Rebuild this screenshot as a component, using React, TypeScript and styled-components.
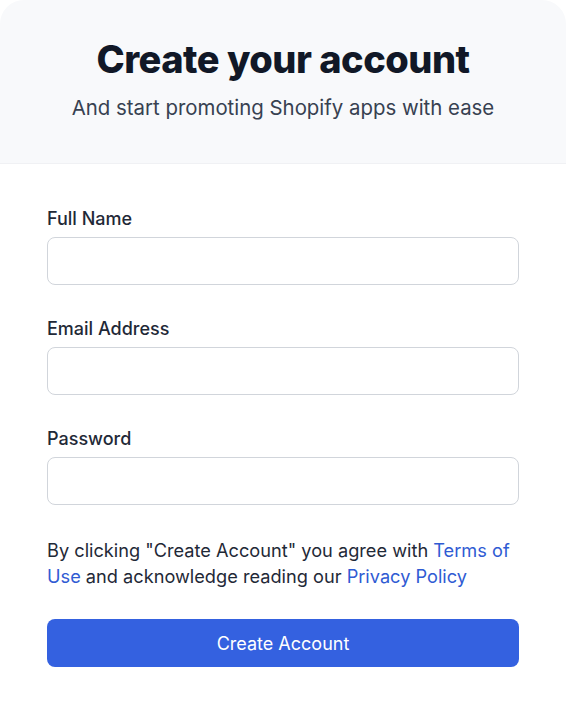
import styled, { createGlobalStyle } from "styled-components";

const GlobalStyle = createGlobalStyle`
  body {
    margin: 0;
    background: #ffffff;
    font-family: Inter, "Noto Sans", sans-serif;
    -webkit-font-smoothing: antialiased;
  }
  * { box-sizing: border-box; }
`;

const fields = [
  { id: "name", label: "Full Name", type: "text" },
  { id: "email", label: "Email Address", type: "email" },
  { id: "password", label: "Password", type: "password" },
];

export default function App(): JSX.Element {
  return (
    <>
      <GlobalStyle />
      <Card>
        <Header>
          <Title>Create your account</Title>
          <Subtitle>And start promoting Shopify apps with ease</Subtitle>
        </Header>
        <Form onSubmit={(e) => e.preventDefault()}>
          {fields.map((f) => (
            <Field key={f.id}>
              <Label htmlFor={f.id}>{f.label}</Label>
              <Input id={f.id} type={f.type} />
            </Field>
          ))}
          <Terms>
            By clicking "Create Account" you agree with{" "}
            <Link href="#">Terms of Use</Link> and acknowledge reading our{" "}
            <Link href="#">Privacy Policy</Link>
          </Terms>
          <SubmitButton type="submit">Create Account</SubmitButton>
        </Form>
      </Card>
    </>
  );
}

const Card = styled.div`
  width: 566px;
  min-height: 702px;
  background: #ffffff;
  border-radius: 24px 24px 0 0;
  overflow: hidden;
`;

const Header = styled.header`
  background: #f8f9fb;
  border-bottom: 1px solid #f0f1f4;
  height: 164px;
  padding-top: 36px;
  text-align: center;
`;

const Title = styled.h1`
  margin: 0;
  font-size: 38px;
  line-height: 46px;
  font-weight: 800;
  letter-spacing: -0.5px;
  color: #111827;
`;

const Subtitle = styled.p`
  margin: 12px 0 0;
  font-size: 20.4px;
  line-height: 28px;
  color: #374151;
`;

const Form = styled.form`
  display: flex;
  flex-direction: column;
  padding: 43px 47px 0;
`;

const Field = styled.div`
  display: flex;
  flex-direction: column;
  gap: 6px;
  margin-bottom: 32px;
`;

const Label = styled.label`
  font-size: 18px;
  line-height: 24px;
  font-weight: 500;
  color: #1f2937;
`;

const Input = styled.input`
  height: 48px;
  border: 1px solid #d1d5db;
  border-radius: 8px;
  background: #ffffff;
  padding: 0 14px;
  font: inherit;
  font-size: 17px;
  outline: none;
`;

const Terms = styled.p`
  margin: 0 0 30px;
  font-size: 18.2px;
  line-height: 26px;
  color: #1f2937;
`;

const Link = styled.a`
  color: #2f5bd3;
  text-decoration: none;
`;

const SubmitButton = styled.button`
  height: 48px;
  border: none;
  border-radius: 8px;
  background: #3461e0;
  color: #ffffff;
  font-family: inherit;
  font-size: 18px;
  font-weight: 400;
  cursor: pointer;
`;
